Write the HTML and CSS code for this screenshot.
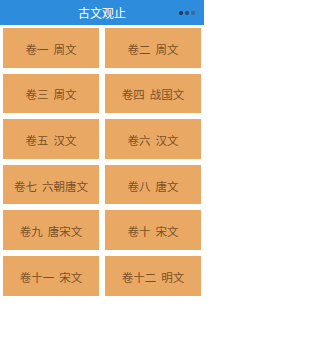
FILE: index.html
```html
<!DOCTYPE html>
<html lang="zh">
<head>
<meta charset="utf-8">
<meta name="viewport" content="width=device-width, initial-scale=1">
<title>古文观止</title>
<link rel="stylesheet" href="styles.css">
</head>
<body>
<div class="app">
<header class="bar">
  <h1 class="title">古文观止</h1>
  <div class="menu"><span class="dot d1"></span><span class="dot d2"></span><span class="dot d3"></span></div>
</header>
<main class="grid">
  <div class="card">卷一 周文</div>
  <div class="card">卷二 周文</div>
  <div class="card">卷三 周文</div>
  <div class="card">卷四 战国文</div>
  <div class="card">卷五 汉文</div>
  <div class="card">卷六 汉文</div>
  <div class="card">卷七 六朝唐文</div>
  <div class="card">卷八 唐文</div>
  <div class="card">卷九 唐宋文</div>
  <div class="card">卷十 宋文</div>
  <div class="card">卷十一 宋文</div>
  <div class="card">卷十二 明文</div>
</main>
</div>
</body>
</html>
```
FILE: styles.css
```css
html, body {
  margin: 0;
  padding: 0;
  background: #ffffff;
  font-family: "Noto Sans CJK SC", "Noto Sans", sans-serif;
}
.app {
  max-width: 204px;
}
.bar {
  position: relative;
  height: 25px;
  background: #2d8ddc;
  display: flex;
  align-items: center;
  justify-content: center;
}
.title {
  margin: 0;
  font-size: 12px;
  font-weight: normal;
  color: #ffffff;
  line-height: 25px;
}
.menu {
  position: absolute;
  right: 9px;
  top: 10.5px;
  display: flex;
  gap: 2px;
}
.dot {
  width: 4px;
  height: 4px;
  border-radius: 50%;
}
.d1 { background: #1b3550; }
.d2 { background: #2c4a6c; }
.d3 { background: #3f6590; }
.grid {
  display: grid;
  grid-template-columns: 1fr 1fr;
  grid-auto-rows: 39.6px;
  gap: 6px;
  padding: 3px;
}
.card {
  box-sizing: border-box;
  padding-top: 2px;
  background: #e9a965;
  color: #7a5026;
  font-size: 11.5px;
  word-spacing: 2.5px;
  display: flex;
  align-items: center;
  justify-content: center;
  white-space: nowrap;
}
```
